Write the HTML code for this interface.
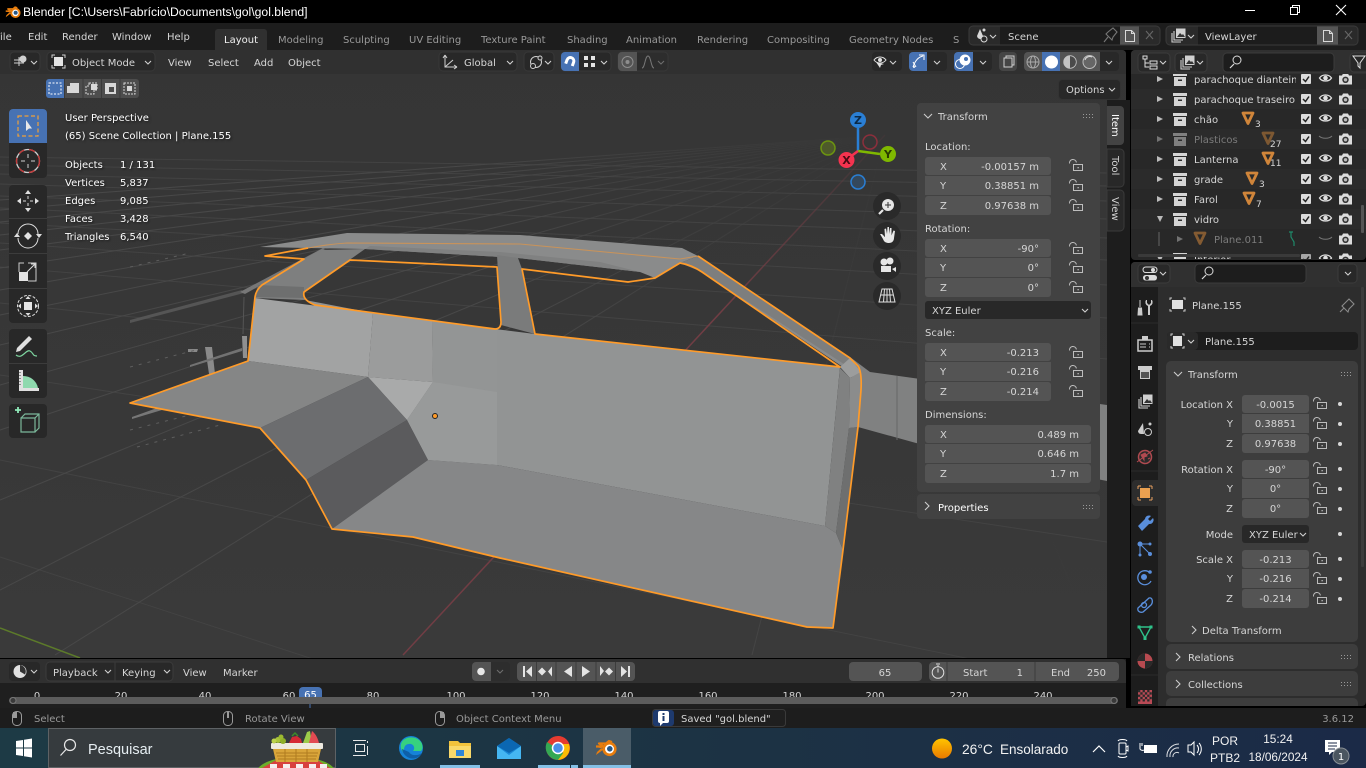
<!DOCTYPE html>
<html><head><meta charset="utf-8"><title>Blender</title>
<style>
html,body{margin:0;padding:0;background:#000;overflow:hidden}
svg{display:block;position:absolute;left:0;top:0}
text{font-family:"DejaVu Sans","Liberation Sans",sans-serif;font-size:10px;fill:#d6d6d6;white-space:pre}
.w{font-family:"Liberation Sans",sans-serif}
.e{text-anchor:end}.m{text-anchor:middle}
.d{fill:#999}.b{fill:#fff}.g{fill:#8a8a8a}
.ic{fill:none;stroke:#d0d0d0;stroke-width:1.1}
.o{fill:none;stroke:#ff9b29;stroke-width:1.7;stroke-linejoin:round}
.sh{filter:drop-shadow(1px 1px 1px rgba(0,0,0,.6))}
</style></head><body>
<svg width="1366" height="768" viewBox="0 0 1366 768" xmlns="http://www.w3.org/2000/svg">
<defs>
<linearGradient id="vp" x1="0" y1="0" x2="0" y2="1"><stop offset="0" stop-color="#353535"/><stop offset="1" stop-color="#3a3a3a"/></linearGradient>
<linearGradient id="tb" x1="0" y1="0" x2="1" y2="0"><stop offset="0" stop-color="#1d3a45"/><stop offset=".5" stop-color="#1c3344"/><stop offset="1" stop-color="#1b2a47"/></linearGradient>
<linearGradient id="sun" x1="0" y1="0" x2="0" y2="1"><stop offset="0" stop-color="#ffc400"/><stop offset="1" stop-color="#ea7a00"/></linearGradient>
<linearGradient id="fan" gradientUnits="userSpaceOnUse" x1="885" y1="135" x2="520" y2="300"><stop offset="0" stop-color="#454545" stop-opacity="0"/><stop offset=".55" stop-color="#454545" stop-opacity=".55"/><stop offset="1" stop-color="#484848"/></linearGradient>
<linearGradient id="red" gradientUnits="userSpaceOnUse" x1="870" y1="150" x2="720" y2="315"><stop offset="0" stop-color="#713d44" stop-opacity=".15"/><stop offset="1" stop-color="#713d44"/></linearGradient>
<clipPath id="cv"><rect x="0" y="74" width="1107" height="584"/></clipPath>
<clipPath id="co"><rect x="1131" y="74" width="235" height="185"/></clipPath>
<clipPath id="cp"><rect x="1131" y="287" width="235" height="419"/></clipPath>
<clipPath id="ct"><rect x="0" y="684" width="1126" height="13"/></clipPath>
<clipPath id="cn"><rect x="1190" y="70" width="106" height="190"/></clipPath>
<clipPath id="cb"><rect x="250" y="728" width="90" height="40"/></clipPath>
<g id="lk"><path d="M.5 4.500A3.400 3.400 0 0 1 7.400 3.400" fill="none" stroke="#bdbdbd" stroke-width="1"/><rect x="4.500" y="5.500" width="9" height="6" fill="none" stroke="#bdbdbd" stroke-width="1"/><rect x="8.500" y="8" width="1.300" height="1.300" fill="#bdbdbd"/></g>
<path id="cd" d="M0 0l3 3 3-3" fill="none" stroke="#d0d0d0" stroke-width="1.1"/>
<g id="box"><rect x="0" y="0" width="14" height="3" fill="#d4d4d4"/><path d="M1 4h12v9H1zM5 6.500v1.500h4V6.500z" fill="#d4d4d4" fill-rule="evenodd"/></g>
<g id="eye"><path d="M.5 5C3 1 10 1 12.500 5 10 9 3 9 .5 5z" fill="none" stroke="#e0e0e0" stroke-width="1.300"/><circle cx="6.500" cy="5" r="2.300" fill="#e0e0e0"/></g>
<g id="cam"><path d="M0 2.500h3l1-2h5l1 2h3v9H0z" fill="#dcdcdc"/><circle cx="6.500" cy="6.800" r="3.200" fill="#333"/><circle cx="6.500" cy="6.800" r="1.700" fill="#bbb"/></g>
<g id="chk"><rect width="10" height="10" rx="1" fill="#dcdcdc"/><path d="M2 5l2.500 2.500L8 2.500" fill="none" stroke="#222" stroke-width="1.500"/></g>
<g id="tri"><path d="M-5 -5H5L0 5.500z" fill="none" stroke="#d0853a" stroke-width="2.800" stroke-linejoin="round"/></g>
<g id="dot"><circle r="2" fill="#d8d8d8"/></g>
<g id="grip" fill="#9a9a9a"><rect x="0" width="1" height="1"/><rect x="3" width="1" height="1"/><rect x="6" width="1" height="1"/><rect x="9" width="1" height="1"/><rect y="3" x="0" width="1" height="1"/><rect y="3" x="3" width="1" height="1"/><rect y="3" x="6" width="1" height="1"/><rect y="3" x="9" width="1" height="1"/></g>
<g id="blg"><path d="M1 8.500h7.500L4 5.500h7L14 3l3 1" fill="none" stroke="#e87d0d" stroke-width="2.200" stroke-linejoin="round"/><circle cx="14.500" cy="11" r="5.800" fill="#fff" stroke="#e87d0d" stroke-width="2.600"/><circle cx="14.800" cy="10.800" r="2.800" fill="#265787"/><path d="M1.500 9l6 0L2 14l-1 3 8-6" fill="#e87d0d"/></g>
<g id="imgs"><path d="M1 5v9h9M3 3v9h9" fill="none" stroke="#d0d0d0" stroke-width="1.100"/><rect x="5" y="0.500" width="9.500" height="9.500" fill="#d0d0d0"/><path d="M6 9l3-4 2 2 1-1 2 3z" fill="#333"/></g>
</defs>

<!-- title bar -->
<rect width="1366" height="23" fill="#000"/>
<use href="#blg" transform="translate(5,5) scale(.72)"/>
<text class="w b" x="23" y="16" style="font-size:12.2px">Blender [C:\Users\Fabrício\Documents\gol\gol.blend]</text>
<rect x="1245" y="10" width="10" height="1" fill="#fff"/>
<path d="M1290.500 7.500h7v7h-7zM1292.500 7V5.500h7v7H1298" fill="none" stroke="#fff"/>
<path d="M1336 5l10 10M1346 5l-10 10" stroke="#fff" stroke-width="1.100"/>

<!-- top bar -->
<rect y="23" width="1366" height="27" fill="#1d1d1d"/>
<text x="-5" y="40">File</text><text x="28" y="40">Edit</text><text x="62" y="40">Render</text><text x="112" y="40">Window</text><text x="167" y="40">Help</text>
<path d="M215 50V32a3 3 0 0 1 3-3h46a3 3 0 0 1 3 3v18z" fill="#303030"/>
<text x="224" y="43" style="fill:#f0f0f0">Layout</text>
<g class="dg"><text class="d" x="278" y="43">Modeling</text><text class="d" x="343" y="43">Sculpting</text><text class="d" x="409" y="43">UV Editing</text><text class="d" x="481" y="43">Texture Paint</text><text class="d" x="567" y="43">Shading</text><text class="d" x="626" y="43">Animation</text><text class="d" x="697" y="43">Rendering</text><text class="d" x="767" y="43">Compositing</text><text class="d" x="849" y="43">Geometry Nodes</text><text class="d" x="953" y="43">S</text></g>
<rect x="960" y="24" width="9" height="26" fill="#1d1d1d"/>
<!-- scene -->
<rect x="969" y="26" width="191" height="19" rx="4" fill="#2a2a2a" stroke="#3a3a3a"/>
<rect x="1000" y="26.500" width="120" height="18" fill="#1c1c1c"/>
<rect x="1120" y="26.500" width="19" height="18" fill="#555"/>
<path d="M980 29l-3 7a3.500 3.500 0 0 0 4 3l2-3z" fill="#d8d8d8"/><circle cx="984" cy="30" r="1.500" fill="#d8d8d8"/><circle cx="984" cy="39" r="3" fill="none" stroke="#d8d8d8"/>
<use href="#cd" transform="translate(990,35)"/>
<text x="1008" y="40">Scene</text>
<path d="M1108 32l5-4 4 4-4 5-1 3-6-6zM1108 37l-4 5" fill="none" stroke="#777" stroke-width="1.100"/>
<path d="M1125.500 30.500h6l3 3v8h-9zM1131.500 30.500v3h3" fill="none" stroke="#d8d8d8" stroke-width="1"/>
<path d="M1146 31l7 8M1153 31l-7 8" stroke="#666" stroke-width="1.100"/>
<rect x="1166" y="26" width="192" height="19" rx="4" fill="#2a2a2a" stroke="#3a3a3a"/>
<rect x="1198" y="26.500" width="119" height="18" fill="#1c1c1c"/>
<rect x="1317" y="26.500" width="21" height="18" fill="#555"/>
<use href="#imgs" transform="translate(1171,28)"/><use href="#cd" transform="translate(1188,35)"/>
<text x="1205" y="40">ViewLayer</text>
<path d="M1323.500 30.500h6l3 3v8h-9zM1329.500 30.500v3h3" fill="none" stroke="#d8d8d8" stroke-width="1"/>
<path d="M1345 31l7 8M1352 31l-7 8" stroke="#666" stroke-width="1.100"/>

<!-- viewport -->
<path d="M0 50H1122a4 4 0 0 1 4 4V658H0z" fill="url(#vp)"/>
<g clip-path="url(#cv)" fill="none" stroke-width="1">
<path stroke="#434343" d="M0 157L1107 173M0 165L1107 186M0 174L1107 201M0 184L1107 219M0 196L1107 238M0 208L1107 260M0 223L1107 285M0 243L1107 318M0 267L1107 359M0 303L1107 420M0 375L1107 542M0 460L1107 687M0 557L500 720"/>
<path stroke="url(#fan)" d="M885 135L0 200M885 135L0 210M885 135L0 222M885 135L0 235M885 135L0 250M885 135L0 268M885 135L0 290M885 135L0 315M885 135L0 345M885 135L0 385M885 135L0 430M885 135L0 500M885 135L0 590M885 135L55 655M885 135L752 655M885 135L1100 655"/>
<path d="M885 135L403 655" stroke="url(#red)" stroke-width="1.500"/>
<path d="M0 628L80 658" stroke="#5c7a2a" stroke-width="1.500"/>
</g>
<!-- stray geometry -->
<g fill="#7d7e7e">
<path d="M130 320L242 290l2 3L130 323z" fill="#555"/>
<path d="M205 347h7l3 27h-6z" fill="#8a8a8a"/><path d="M190 365l52-17v3l-52 16z" fill="#727272"/>
<path d="M188 349h10l-1 3h-9z" fill="#888"/><path d="M242 336h5v22h-4z" fill="#909090"/>
<path d="M132 417l25-9 5 2-30 9z" fill="#777"/>
<path d="M244 297L243 334" stroke="#555" fill="none"/>
<path d="M240 292L323 248l2 1-80 45z" fill="#777"/>
</g>
<g fill="none" stroke="#5e5e5e" stroke-dasharray="3 6"><path d="M130 267L190 253M130 367L200 349M130 430L210 410M137 447L220 425"/></g>
<!-- side wing -->
<path d="M850 357L870 372L1107 405V481L916 443L858 427z" fill="#808181"/>
<path d="M897 376V440" stroke="#666" stroke-width="1"/>
<!-- roof -->
<path d="M260 247L347 233L520 235L682 248L698 256L680 263L655 278L640 272L518 258L365 249L308 248z" fill="#8a8b8b"/>
<path d="M365 249L518 258L640 272L600 262L500 252L370 246z" fill="#808181"/>
<!-- C pillar -->
<path d="M262 285L304 259L320 250L365 249L304 292L305 300L255 298z" fill="#7e7f7f"/>
<path d="M258 285L304 287L304 298L255 297z" fill="#6e6f6f"/>
<!-- B pillar -->
<path d="M497 255L518 258L522 269L535 334L501 325z" fill="#7a7b7b"/>
<!-- A pillar -->
<path d="M680 263L698 256L850 358L860 365L843 367L702 272z" fill="#7d7e7e"/>
<path d="M702 272L850 368L843 367z" fill="#8a8b8b"/>
<path d="M840 367L850 358L861 372L850 378z" fill="#9c9d9d"/>
<!-- body -->
<path d="M255 298L373 313L368 377L248 361z" fill="#a2a3a3"/>
<path d="M373 313L432 320L433 382L368 377z" fill="#9b9c9c"/>
<path d="M305 300L315 305L495 329L535 334L840 367L825 526L497 465L428 460L407 420L433 382L432 320L373 313z" fill="#929494"/>
<path d="M432 320L497 330L497 392L433 382z" fill="#939595"/>
<path d="M368 377L433 382L407 420z" fill="#a9aaaa"/>
<path d="M433 382L497 392V465L428 460L407 420z" fill="#989a9a"/>
<path d="M130 403L248 361L368 377L260 428z" fill="#858686"/>
<path d="M260 428L368 377L407 420L306 480z" fill="#6c6d6f"/>
<path d="M306 480L407 420L428 460L332 529z" fill="#5b5b5d"/>
<path d="M332 529L428 460L497 465L825 526L836 533L843 550L833 628L807 627L500 558L413 537z" fill="#868788"/>
<path d="M825 526L840 368L850 378L849 428L836 533z" fill="#808181"/>
<path d="M836 533L849 428L858 427L843 550z" fill="#6e6f6f"/>
<path d="M850 378L861 372L861 390L858 427L849 428z" fill="#8b8c8c"/>
<!-- outlines -->
<path class="o" d="M308 248L265 256L304 259L262 285Q256 290 255 297L248 361L130 403L260 428L306 480L332 529L413 537L500 558L807 627L833 628L843 550L858 427L861 390Q862 372 858 366L850 358L698 256"/>
<path d="M308 248Q330 244 347 243L520 244L680 259L698 256" fill="none" stroke="#c9935a" stroke-width="1.100"/>
<path class="o" d="M350 260L497 267L501 322Q501 329 495 329L315 305Q302 300 304 292z"/>
<path class="o" d="M522 269L628 282L655 278L680 263Q692 265 702 272L840 367L535 334z"/>
<circle cx="435" cy="416" r="2.500" fill="#ff9b29" stroke="#222" stroke-width="1"/>

<!-- viewport header -->
<path d="M0 50H1122a4 4 0 0 1 4 4V74H0z" fill="#303030"/>
<rect x="10" y="52" width="30" height="19" rx="4" fill="#282828" stroke="#383838"/>
<path d="M14 60h10M14 63h10M19 57v9" stroke="#d0d0d0"/><circle cx="23" cy="59" r="3.500" fill="#d0d0d0"/><use href="#cd" transform="translate(31,61)"/>
<rect x="47" y="52" width="108" height="19" rx="4" fill="#282828" stroke="#383838"/>
<path d="M52 58v-3h3M62 55h3v3M65 65v3h-3M55 68h-3v-3" fill="none" stroke="#d0d0d0"/><rect x="54" y="57" width="9" height="9" fill="#e4e4e4"/>
<text x="72" y="66">Object Mode</text><use href="#cd" transform="translate(145,61)"/>
<text x="168" y="66">View</text><text x="208" y="66">Select</text><text x="254" y="66">Add</text><text x="288" y="66">Object</text>
<rect x="439" y="52" width="78" height="19" rx="4" fill="#282828" stroke="#383838"/>
<path d="M445 55v12h12M445 55l-2 3M445 55l2 3M457 67l-3-2M457 67l-3 2M445 67l8-7" fill="none" stroke="#d0d0d0"/>
<text x="464" y="66">Global</text><use href="#cd" transform="translate(507,61)"/>
<rect x="524" y="52" width="30" height="19" rx="4" fill="#282828" stroke="#383838"/>
<circle cx="536" cy="62" r="5.500" fill="none" stroke="#d0d0d0"/><circle cx="533" cy="66" r="2.500" fill="#282828" stroke="#d0d0d0"/><circle cx="540" cy="58" r="2" fill="#282828" stroke="#d0d0d0"/><use href="#cd" transform="translate(545,61)"/>
<rect x="561" y="52" width="50" height="19" rx="4" fill="#282828" stroke="#383838"/>
<path d="M561 56a4 4 0 0 1 4-4h14v19h-14a4 4 0 0 1-4-4z" fill="#4772b3"/>
<path d="M565 65v-4a5 5 0 0 1 10 0v4h-3v-4a2 2 0 0 0-4 0v4z" fill="#fff" transform="rotate(20 570 62)"/>
<g fill="#e4e4e4"><rect x="584" y="56" width="4" height="4"/><rect x="591" y="56" width="4" height="4"/><rect x="584" y="63" width="4" height="4"/><rect x="591" y="63" width="4" height="4"/></g><use href="#cd" transform="translate(601,61)"/>
<rect x="618" y="52" width="50" height="19" rx="4" fill="#2d2d2d" stroke="#383838"/>
<path d="M618 56a4 4 0 0 1 4-4h15v19h-15a4 4 0 0 1-4-4z" fill="#545454"/>
<circle cx="627.500" cy="62" r="5.500" fill="none" stroke="#8e8e8e"/><circle cx="627.500" cy="62" r="2" fill="#8e8e8e"/>
<path d="M642 68c3 0 3-12 6-12s3 12 6 12" fill="none" stroke="#777"/><use href="#cd" transform="translate(658,61)" opacity=".4"/>

<rect x="872" y="52" width="30" height="19" rx="4" fill="#282828"/>
<path d="M874 60c3-4 9-4 12 0-3 4-9 4-12 0z" fill="none" stroke="#e0e0e0"/><circle cx="880" cy="60" r="2" fill="#e0e0e0"/><path d="M876 62l4 6 1-3 3-1z" fill="#e0e0e0"/><use href="#cd" transform="translate(890,61)"/>
<rect x="909" y="52" width="38" height="19" rx="4" fill="#282828"/>
<path d="M909 56a4 4 0 0 1 4-4h14v19h-14a4 4 0 0 1-4-4z" fill="#4772b3"/>
<path d="M913 67c2-6 5-10 10-11M919 55h5v5M913 62l3 5" fill="none" stroke="#fff"/><circle cx="914" cy="67" r="1" fill="#fff"/><use href="#cd" transform="translate(934,61)"/>
<rect x="954" y="52" width="38" height="19" rx="4" fill="#282828"/>
<path d="M954 56a4 4 0 0 1 4-4h15v19h-15a4 4 0 0 1-4-4z" fill="#4772b3"/>
<circle cx="965" cy="60" r="5.500" fill="#fff"/><circle cx="960" cy="64" r="4.500" fill="none" stroke="#fff"/><circle cx="966" cy="59" r="2" fill="#4772b3"/><use href="#cd" transform="translate(980,61)"/>
<rect x="999" y="52" width="18" height="19" rx="4" fill="#454545"/>
<path d="M1004 58h8v9h-8zM1006 58v-2h8v9h-2" fill="none" stroke="#d0d0d0"/>
<rect x="1024" y="52" width="95" height="19" rx="4" fill="#282828"/>
<rect x="1042" y="52" width="18" height="19" fill="#4772b3"/><rect x="1060" y="52" width="40" height="19" fill="#545454"/>
<path d="M1024 56a4 4 0 0 1 4-4h14v19h-14a4 4 0 0 1-4-4z" fill="#545454"/>
<circle cx="1033" cy="62" r="6" fill="none" stroke="#aaa"/><ellipse cx="1033" cy="62" rx="2.500" ry="6" fill="none" stroke="#aaa"/><path d="M1027 62h12" stroke="#aaa"/>
<circle cx="1051.500" cy="62" r="6.500" fill="#fff"/>
<circle cx="1070" cy="62" r="6.500" fill="#c4c4c4"/><path d="M1070 56a6 6 0 0 1 0 12z" fill="#4a4a4a"/><circle cx="1070" cy="62" r="6.300" fill="none" stroke="#c4c4c4" stroke-width=".8"/>
<circle cx="1089.500" cy="62" r="6.500" fill="#666" stroke="#bdbdbd"/><path d="M1085 60a5 5 0 0 1 7-3" stroke="#ddd" fill="none"/>
<use href="#cd" transform="translate(1106,61)"/>
<rect x="46" y="79" width="93" height="19" rx="3" fill="#4d4d4d"/>
<path d="M46 82a3 3 0 0 1 3-3h15v19H49a3 3 0 0 1-3-3z" fill="#4772b3"/>
<path d="M64.500 79v19M83 79v19M101.500 79v19M120 79v19" stroke="#3a3a3a"/>
<rect x="49" y="83" width="12" height="11" fill="none" stroke="#fff" stroke-dasharray="2 1.500"/>
<path d="M70 83h9v10h-12v-7h3z" fill="#d8d8d8"/>
<path d="M89 83h8v7h-3v4h-8v-8h3z" fill="none" stroke="#d8d8d8" stroke-dasharray="2 1"/><rect x="91" y="84" width="6" height="6" fill="#d8d8d8"/>
<path d="M105 83h11v11h-11z" fill="#d8d8d8"/><rect x="109" y="87" width="5" height="5" fill="#4d4d4d"/>
<rect x="124" y="83" width="11" height="11" fill="none" stroke="#d8d8d8" stroke-dasharray="2 1"/><rect x="127" y="86" width="5" height="5" fill="#d8d8d8"/>
<rect x="1058.500" y="79.500" width="62" height="20" rx="4" fill="#282828" stroke="#333"/>
<text x="1066" y="93">Options</text><use href="#cd" transform="translate(1109,88)"/>

<!-- left toolbar -->
<g fill="#282828"><rect x="9" y="109" width="38" height="69" rx="4"/><rect x="9" y="185" width="38" height="138" rx="4"/><rect x="9" y="329" width="38" height="69" rx="4"/><rect x="9" y="404" width="38" height="34" rx="4"/></g>
<path d="M9 143V113a4 4 0 0 1 4-4h30a4 4 0 0 1 4 4v30z" fill="#4772b3"/>
<path d="M9 218.500h38M9 253.500h38M9 288.500h38M9 363.500h38" stroke="#3c3c3c"/>
<rect x="18" y="116" width="20" height="20" fill="none" stroke="#f0a13a" stroke-width="1.200" stroke-dasharray="4 2.500"/>
<path d="M26 120v11l3-2.500 3 0z" fill="#e8e8e8"/>
<circle cx="28" cy="161" r="11.500" fill="none" stroke="#d0d0d0" stroke-width="1.300"/><circle cx="28" cy="161" r="11.500" fill="none" stroke="#c23a3a" stroke-width="1.400" stroke-dasharray="6 5"/>
<path d="M28 154v4M28 164v4M21 161h4M31 161h4" stroke="#d0d0d0"/>
<path d="M28 190l3 4h-6zM28 212l3-4h-6zM17 201l4-3v6zM39 201l-4-3v6z" fill="#e0e0e0"/><path d="M28 196v3M28 203v3M23 201h3M30 201h3" stroke="#ddd"/>
<path d="M18 234a10 10 0 0 1 20 0M18 238a10 10 0 0 0 20 0" fill="none" stroke="#ddd"/><path d="M28 232l4 4-4 4-4-4z" fill="#e4e4e4"/><path d="M17 233l3 4h-6zM39 238l3-4h-6z" fill="#ddd"/>
<rect x="19" y="272" width="9" height="9" fill="#e4e4e4"/><path d="M28 263h8v18h-8M19 272v-9h5" fill="none" stroke="#ccc"/><path d="M27 272l8-8M31 264h4v4" fill="none" stroke="#ddd"/>
<circle cx="28" cy="306" r="10.500" fill="none" stroke="#ddd" stroke-dasharray="3 1.500"/><rect x="24" y="302" width="8" height="8" fill="#e4e4e4"/><path d="M28 296l2.500 3h-5zM28 316l2.500-3h-5zM18 306l3-2.500v5zM38 306l-3-2.500v5z" fill="#ddd"/>
<path d="M17 348l12-12 3 3-12 12-4 1z" fill="#e0e0e0"/><path d="M19 352c6 5 10-6 14-4s2 5 7 5" fill="none" stroke="#7ed6a0" stroke-width="1.200" transform="translate(-3,3)"/>
<path d="M19 370h4v18h16v3H19z" fill="#e0e0e0"/><path d="M23 376a15 15 0 0 1 15 12H23z" fill="#8fd9ae"/><path d="M20 372v14" stroke="#333" stroke-dasharray="1 2"/>
<path d="M21 418h14v14H21zM21 418l4-4h14v14l-4 4M35 418l4-4" fill="none" stroke="#7bb89a" stroke-width="1.200"/><path d="M15 410h6M18 407v6" stroke="#8fe8b8" stroke-width="1.800"/>

<!-- overlay text -->
<g class="sh"><text x="65" y="121" class="b">User Perspective</text><text x="65" y="139" class="b">(65) Scene Collection | Plane.155</text>
<text x="65" y="168" class="b">Objects</text><text x="120" y="168" class="b">1 / 131</text>
<text x="65" y="186" class="b">Vertices</text><text x="120" y="186" class="b">5,837</text>
<text x="65" y="204" class="b">Edges</text><text x="120" y="204" class="b">9,085</text>
<text x="65" y="222" class="b">Faces</text><text x="120" y="222" class="b">3,428</text>
<text x="65" y="240" class="b">Triangles</text><text x="120" y="240" class="b">6,540</text></g>

<!-- gizmo -->
<path d="M858 151V128" stroke="#2a7fd5" stroke-width="2.500"/><path d="M858 151L880 154" stroke="#7fb800" stroke-width="2.500"/><path d="M858 151L846 160" stroke="#f5334f" stroke-width="2.500"/>
<circle cx="870" cy="142" r="7" fill="none" stroke="#8c2f3c" stroke-width="1.500"/>
<circle cx="828" cy="148" r="7" fill="#4e5a2a" stroke="#6c9410" stroke-width="1.500"/>
<circle cx="858" cy="182" r="7" fill="#34485c" stroke="#2a7fd5" stroke-width="1.500"/>
<circle cx="858" cy="120" r="8" fill="#2a7fd5"/><circle cx="888" cy="154" r="8" fill="#7fb800"/><circle cx="846.500" cy="160" r="8" fill="#f5334f"/>
<text class="m" x="858" y="124" style="font-size:11px;font-weight:700;fill:#0c2a48">Z</text>
<text class="m" x="888" y="158" style="font-size:11px;font-weight:700;fill:#2a3a00">Y</text>
<text class="m" x="846.500" y="164" style="font-size:11px;font-weight:700;fill:#4a0a14">X</text>
<g fill="#2a2a2a"><circle cx="887" cy="206" r="14"/><circle cx="887" cy="236" r="14"/><circle cx="887" cy="266" r="14"/><circle cx="887" cy="296" r="14"/></g>
<circle cx="888" cy="205" r="6" fill="#e6e6e6"/><path d="M883 210l-4 4" stroke="#e6e6e6" stroke-width="2.200"/><path d="M888 202v6M885 205h6" stroke="#333"/>
<path d="M880 234l3 5c1 3 3 4 6 4s5-2 5-5l1-7-1.500-.5-2 5V228h-1.500l-1 6v-7h-1.500l-.5 7-1-5.500-1.500.5.500 8-3-3z" fill="#e8e8e8"/>
<circle cx="884" cy="262" r="3.500" fill="#e6e6e6"/><circle cx="890" cy="261" r="3.500" fill="#e6e6e6"/><rect x="881" y="266" width="10" height="6" fill="#e6e6e6"/><path d="M892 269l4-2v5z" fill="#e6e6e6"/>
<path d="M882 289h10l3 13h-16zM887 289v13M880.500 295h13M884.500 289l-1 13M889.500 289l1 13" fill="none" stroke="#e0e0e0"/>

<!-- N panel -->
<rect x="1107" y="100" width="23" height="558" fill="#1d1d1d"/>
<path d="M1107 106h13a4 4 0 0 1 4 4v31a4 4 0 0 1-4 4h-13z" fill="#434343"/>
<path d="M1107 149h13a4 4 0 0 1 4 4v30a4 4 0 0 1-4 4h-13zM1107 190h13a4 4 0 0 1 4 4v33a4 4 0 0 1-4 4h-13z" fill="#282828" stroke="#3a3a3a"/>
<text transform="translate(1112,114) rotate(90)" class="b">Item</text>
<text transform="translate(1112,156) rotate(90)">Tool</text>
<text transform="translate(1112,197) rotate(90)">View</text>
<rect x="917" y="103" width="183" height="389" rx="4" fill="#424242"/>
<rect x="917" y="494" width="183" height="25" rx="4" fill="#424242"/>
<path d="M924 114l4 4 4-4" fill="none" stroke="#ccc" stroke-width="1.100"/><text x="938" y="120">Transform</text><use href="#grip" transform="translate(1083,114)"/>
<path d="M925 502l4 4-4 4" fill="none" stroke="#ccc" stroke-width="1.100"/><text x="938" y="511" class="b">Properties</text><use href="#grip" transform="translate(1083,505)"/>
<text x="925" y="150">Location:</text><text x="925" y="232">Rotation:</text><text x="925" y="336">Scale:</text><text x="925" y="418">Dimensions:</text>
<g fill="#545454"><rect x="925" y="157" width="126" height="18" rx="3"/><rect x="925" y="176" width="126" height="19"/><rect x="925" y="196" width="126" height="19" rx="3"/>
<rect x="925" y="239" width="126" height="18" rx="3"/><rect x="925" y="258" width="126" height="19"/><rect x="925" y="278" width="126" height="19" rx="3"/>
<rect x="925" y="343" width="126" height="18" rx="3"/><rect x="925" y="362" width="126" height="19"/><rect x="925" y="382" width="126" height="19" rx="3"/>
<rect x="925" y="425" width="166" height="18" rx="3"/><rect x="925" y="444" width="166" height="19"/><rect x="925" y="464" width="166" height="19" rx="3"/></g>
<rect x="925" y="301" width="166" height="18" rx="3" fill="#282828"/><text x="932" y="314">XYZ Euler</text><use href="#cd" transform="translate(1082,309)"/>
<g class="xyz"><text x="940" y="170">X</text><text x="940" y="189">Y</text><text x="940" y="209">Z</text><text x="940" y="252">X</text><text x="940" y="271">Y</text><text x="940" y="291">Z</text><text x="940" y="356">X</text><text x="940" y="375">Y</text><text x="940" y="395">Z</text><text x="940" y="438">X</text><text x="940" y="457">Y</text><text x="940" y="477">Z</text></g>
<text class="e" x="1039" y="170">-0.00157 m</text><text class="e" x="1039" y="189">0.38851 m</text><text class="e" x="1039" y="209">0.97638 m</text>
<text class="e" x="1039" y="252">-90°</text><text class="e" x="1039" y="271">0°</text><text class="e" x="1039" y="291">0°</text>
<text class="e" x="1039" y="356">-0.213</text><text class="e" x="1039" y="375">-0.216</text><text class="e" x="1039" y="395">-0.214</text>
<text class="e" x="1079" y="438">0.489 m</text><text class="e" x="1079" y="457">0.646 m</text><text class="e" x="1079" y="477">1.7 m</text>
<use href="#lk" transform="translate(1069,159)"/><use href="#lk" transform="translate(1069,179)"/><use href="#lk" transform="translate(1069,199)"/>
<use href="#lk" transform="translate(1069,242)"/><use href="#lk" transform="translate(1069,261)"/><use href="#lk" transform="translate(1069,281)"/>
<use href="#lk" transform="translate(1069,346)"/><use href="#lk" transform="translate(1069,365)"/><use href="#lk" transform="translate(1069,385)"/>

<!-- outliner -->
<rect x="1131" y="50" width="235" height="210" rx="4" fill="#282828"/>
<g clip-path="url(#co)">
<rect x="1131" y="89" width="235" height="20" fill="#2b2b2b"/><rect x="1131" y="129" width="235" height="20" fill="#2b2b2b"/><rect x="1131" y="169" width="235" height="20" fill="#2b2b2b"/><rect x="1131" y="209" width="235" height="20" fill="#2b2b2b"/>
<g fill="#bbb"><path d="M1157 76l6 3-6 3zM1157 96l6 3-6 3zM1157 116l6 3-6 3zM1157 156l6 3-6 3zM1157 176l6 3-6 3zM1157 196l6 3-6 3z"/><path d="M1157 136l6 3-6 3z" opacity=".5"/><path d="M1157 216h6l-3 6zM1157 256h6l-3 6z"/><path d="M1177 236l6 3-6 3z" opacity=".5"/></g>
<use href="#box" transform="translate(1173,73)"/><use href="#box" transform="translate(1173,93)"/><use href="#box" transform="translate(1173,113)"/><use href="#box" transform="translate(1173,133)" opacity=".5"/><use href="#box" transform="translate(1173,153)"/><use href="#box" transform="translate(1173,173)"/><use href="#box" transform="translate(1173,193)"/><use href="#box" transform="translate(1173,213)"/><use href="#box" transform="translate(1173,253)"/>
<path d="M1159 232v14" stroke="#666"/>
<g clip-path="url(#cn)"><text x="1194" y="83">parachoque diantein</text></g>
<text x="1194" y="103">parachoque traseiro</text>
<text x="1194" y="123">chão</text><text x="1194" y="143" style="fill:#7a7a7a">Plasticos</text><text x="1194" y="163">Lanterna</text><text x="1194" y="183">grade</text><text x="1194" y="203">Farol</text><text x="1194" y="223">vidro</text><text x="1214" y="243" style="fill:#7c7c7c">Plane.011</text><text x="1194" y="263">Interior</text>
<use href="#tri" transform="translate(1248,118)"/><use href="#tri" transform="translate(1268,138)" opacity=".5"/><use href="#tri" transform="translate(1268,158)"/><use href="#tri" transform="translate(1252,178)"/><use href="#tri" transform="translate(1249,198)"/><use href="#tri" transform="translate(1200,238)" opacity=".55"/>
<text x="1255" y="127" style="font-size:9px">3</text><text x="1270" y="147" style="font-size:9px">27</text><text x="1270" y="166" style="font-size:9px">11</text><text x="1259" y="187" style="font-size:9px">3</text><text x="1256" y="207" style="font-size:9px">7</text>
<path d="M1289 232h4M1291 232l0 5 3 5v4" fill="none" stroke="#1f8a6a" stroke-width="1.200"/>
<use href="#chk" transform="translate(1301,74)"/><use href="#chk" transform="translate(1301,94)"/><use href="#chk" transform="translate(1301,114)"/><use href="#chk" transform="translate(1301,134)"/><use href="#chk" transform="translate(1301,154)"/><use href="#chk" transform="translate(1301,174)"/><use href="#chk" transform="translate(1301,194)"/><use href="#chk" transform="translate(1301,214)"/><use href="#chk" transform="translate(1301,254)" opacity=".7"/>
<use href="#eye" transform="translate(1319,73)"/><use href="#eye" transform="translate(1319,93)"/><use href="#eye" transform="translate(1319,113)"/><path d="M1319 136c3 3 10 3 13 0" fill="none" stroke="#777"/><use href="#eye" transform="translate(1319,153)"/><use href="#eye" transform="translate(1319,173)"/><use href="#eye" transform="translate(1319,193)"/><use href="#eye" transform="translate(1319,213)"/><path d="M1319 237c3 3 10 3 13 0" fill="none" stroke="#777"/><use href="#eye" transform="translate(1319,253)"/>
<use href="#cam" transform="translate(1339,73)"/><use href="#cam" transform="translate(1339,93)"/><use href="#cam" transform="translate(1339,113)"/><use href="#cam" transform="translate(1339,133)"/><use href="#cam" transform="translate(1339,153)"/><use href="#cam" transform="translate(1339,173)"/><use href="#cam" transform="translate(1339,193)"/><use href="#cam" transform="translate(1339,213)"/><use href="#cam" transform="translate(1339,233)"/><use href="#cam" transform="translate(1339,253)"/>
<rect x="1361" y="205" width="3" height="28" rx="1" fill="#555"/><rect x="1138" y="254" width="162" height="3" rx="1" fill="#3a3a3a"/>
</g>
<path d="M1131 54a4 4 0 0 1 4-4h231v24H1131z" fill="#303030"/>
<rect x="1138" y="53" width="32" height="19" rx="4" fill="#282828" stroke="#3b3b3b"/>
<path d="M1143 56h4v3h-4zM1145 59v8h4M1145 63h4M1150 61h7v3h-7zM1150 66h7v3h-7z" fill="none" stroke="#ddd"/><use href="#cd" transform="translate(1160,61)"/>
<rect x="1175" y="53" width="32" height="19" rx="4" fill="#282828" stroke="#3b3b3b"/><use href="#imgs" transform="translate(1180,55)"/><use href="#cd" transform="translate(1197,61)"/>
<rect x="1223" y="53" width="111" height="19" rx="4" fill="#1d1d1d" stroke="#3b3b3b"/>
<circle cx="1237" cy="60" r="4" fill="none" stroke="#ddd"/><path d="M1234 64l-4 4" stroke="#ddd" stroke-width="1.200"/>
<rect x="1350" y="53" width="20" height="19" rx="4" fill="#282828" stroke="#3b3b3b"/><path d="M1353 56h12l-5 7v5l-2-2v-3z" fill="none" stroke="#ddd"/>

<!-- properties -->
<rect x="1131" y="262" width="235" height="444" rx="4" fill="#2d2d2d"/>
<path d="M1131 266a4 4 0 0 1 4-4h231v25H1131z" fill="#303030"/>
<rect x="1138" y="264" width="32" height="19" rx="4" fill="#282828" stroke="#3b3b3b"/>
<rect x="1143" y="267" width="14" height="5.500" rx="2.700" fill="none" stroke="#ddd"/><circle cx="1153" cy="270" r="2" fill="#ddd"/><rect x="1143" y="275" width="14" height="5.500" rx="2.700" fill="#ddd"/><circle cx="1147" cy="278" r="2" fill="#333"/><use href="#cd" transform="translate(1160,272)"/>
<rect x="1195" y="264" width="111" height="19" rx="4" fill="#1d1d1d" stroke="#3b3b3b"/>
<circle cx="1209" cy="271" r="4" fill="none" stroke="#ddd"/><path d="M1206 275l-4 4" stroke="#ddd" stroke-width="1.200"/>
<rect x="1338" y="264" width="19" height="19" rx="4" fill="#282828" stroke="#3b3b3b"/><use href="#cd" transform="translate(1345,272)"/>
<rect x="1131" y="287" width="27" height="419" fill="#1d1d1d"/>
<path d="M1131 323h27M1131 471h27M1131 675h27" stroke="#2a2a2a"/>
<path d="M1132 484a4 4 0 0 1 4-4h22v26h-22a4 4 0 0 1-4-4z" fill="#2d2d2d"/>
<g clip-path="url(#cp)">
<path d="M1140 300v7M1138.500 308h3l.5 7h-4z" stroke="#ccc" fill="#ccc"/><path d="M1147 300v3l2 2 2-2v-3l1 0a4 4 0 0 1-2 6v9h-2v-9a4 4 0 0 1-2-6z" fill="#ccc"/>
<rect x="1138" y="340" width="14" height="11" fill="none" stroke="#ccc" stroke-width="1.500"/><rect x="1142" y="336" width="6" height="4" fill="#ccc"/><path d="M1140 344h6M1140 347h6M1149 344h1M1149 347h1" stroke="#ccc"/>
<path d="M1138 366h14v4h-2v9h-10v-9h-2z" fill="#ccc"/><rect x="1141" y="372" width="8" height="6" fill="#555"/>
<use href="#imgs" transform="translate(1138,394)"/>
<path d="M1143 423l-5 8a3 3 0 0 0 3 3h3z" fill="#ccc"/><circle cx="1150" cy="424" r="1.500" fill="#ccc"/><circle cx="1148" cy="432" r="3.500" fill="none" stroke="#ccc"/>
<circle cx="1145" cy="457" r="6.500" fill="#2a2a2a" stroke="#b04a50" stroke-width="1.500"/><path d="M1141 455l4-2 2 3-3 1v3zM1148 459l2-1" stroke="#b04a50" fill="#b04a50"/><path d="M1137 462l16-12" stroke="#b04a50"/>
<path d="M1138 486v3M1138 486h3M1152 486h-3M1152 486v3M1138 500v-3M1138 500h3M1152 500h-3M1152 500v-3" stroke="#e8a060" fill="none"/><rect x="1140" y="488" width="10" height="10" fill="#eaa050"/>
<path d="M1138 526l7-7a4 4 0 0 1 6-3l-3 3 2 2 3-3a4 4 0 0 1-4 6l-7 7z" fill="#5a8fdc"/>
<circle cx="1140" cy="544" r="2.500" fill="#5a8fdc"/><circle cx="1140" cy="555" r="1.500" fill="#5a8fdc"/><circle cx="1150" cy="554" r="2" fill="#5a8fdc"/><circle cx="1150" cy="544" r="1.500" fill="#5a8fdc"/><path d="M1140 544v11M1140 544l10 10M1140 544h10" stroke="#5a8fdc"/>
<circle cx="1144" cy="577" r="3" fill="#5a8fdc"/><path d="M1151 581a7 7 0 1 1-1-8" fill="none" stroke="#5a8fdc" stroke-width="1.300"/><circle cx="1150" cy="572" r="1.800" fill="#5a8fdc"/>
<path d="M1138 608l11-10c4-1 4 5 2 7l-8 7c-3 1-6-1-5-4z" fill="none" stroke="#5a8fdc" stroke-width="1.300"/><circle cx="1144" cy="605" r="2.500" fill="none" stroke="#5a8fdc" stroke-width="1.300"/>
<path d="M1139 627h12l-6 11z" fill="none" stroke="#2ec28a" stroke-width="1.400"/><g fill="#2ec28a"><rect x="1137.500" y="625.500" width="3" height="3"/><rect x="1149.500" y="625.500" width="3" height="3"/><rect x="1143.500" y="637" width="3" height="3"/></g>
<circle cx="1145" cy="661" r="7.500" fill="#b84a50"/><path d="M1145 653.500a7.500 7.500 0 0 0-7.500 7.500h7.500zM1145 661h7.500a7.500 7.500 0 0 1-7.500 7.500z" fill="#2a2a2a"/>
<rect x="1138" y="690" width="14" height="14" fill="#b84a55"/><path d="M1138 690h2.300v2.300h-2.300zM1142.600 690h2.300v2.300h-2.300zM1147.200 690h2.300v2.300h-2.300zM1140.300 692.300h2.300v2.300h-2.300zM1144.900 692.300h2.300v2.300h-2.300zM1149.500 692.300h2.300v2.300h-2.300zM1138 694.600h2.300v2.300h-2.300zM1142.600 694.600h2.300v2.300h-2.300zM1147.200 694.600h2.300v2.300h-2.300zM1140.300 696.900h2.300v2.300h-2.300zM1144.900 696.900h2.300v2.300h-2.300zM1149.500 696.900h2.300v2.300h-2.300zM1138 699.200h2.300v2.300h-2.300zM1142.600 699.200h2.300v2.300h-2.300zM1147.200 699.200h2.300v2.300h-2.300z" fill="#2a2a2a"/>
</g>
<path d="M1170 300v-2h2M1183 298h2v2M1185 309v2h-2M1172 311h-2v-2" fill="none" stroke="#ccc"/><rect x="1172" y="300" width="11" height="9" fill="#e0e0e0"/>
<text x="1192" y="309">Plane.155</text>
<path d="M1344 304l5-5 5 5-5 5-1 3-6-6zM1344 308l-4 4" fill="none" stroke="#8a8a8a" stroke-width="1.100"/>
<rect x="1167" y="332" width="191" height="18" rx="4" fill="#1d1d1d"/><rect x="1167" y="332" width="31" height="18" rx="4" fill="#2a2a2a"/>
<path d="M1171 336v-2h2M1182 334h2v2M1184 346v2h-2M1173 348h-2v-2" fill="none" stroke="#ccc"/><rect x="1173" y="336" width="9" height="10" fill="#e0e0e0"/><use href="#cd" transform="translate(1188,340)"/>
<text x="1205" y="345">Plane.155</text>
<rect x="1166" y="361" width="192" height="281" rx="5" fill="#3d3d3d"/>
<rect x="1166" y="644" width="192" height="25" rx="5" fill="#3d3d3d"/><rect x="1166" y="671" width="192" height="25" rx="5" fill="#3d3d3d"/>
<path d="M1166 703a5 5 0 0 1 5-5h182a5 5 0 0 1 5 5v3h-192z" fill="#3d3d3d"/>
<path d="M1174 372l4 4 4-4" fill="none" stroke="#ccc" stroke-width="1.100"/><text x="1188" y="378">Transform</text><use href="#grip" transform="translate(1341,372)"/>
<g fill="#545454"><rect x="1242" y="395" width="67" height="18" rx="3"/><rect x="1242" y="414" width="67" height="19"/><rect x="1242" y="434" width="67" height="19" rx="3"/><rect x="1242" y="460" width="67" height="18" rx="3"/><rect x="1242" y="479" width="67" height="19"/><rect x="1242" y="499" width="67" height="19" rx="3"/><rect x="1242" y="550" width="67" height="18" rx="3"/><rect x="1242" y="569" width="67" height="19"/><rect x="1242" y="589" width="67" height="19" rx="3"/></g>
<rect x="1242" y="525" width="67" height="18" rx="3" fill="#282828"/>
<text class="e" x="1233" y="408">Location X</text><text class="e" x="1233" y="427">Y</text><text class="e" x="1233" y="447">Z</text>
<text class="e" x="1233" y="473">Rotation X</text><text class="e" x="1233" y="492">Y</text><text class="e" x="1233" y="512">Z</text>
<text class="e" x="1233" y="538">Mode</text>
<text class="e" x="1233" y="563">Scale X</text><text class="e" x="1233" y="582">Y</text><text class="e" x="1233" y="602">Z</text>
<text class="m" x="1275.500" y="408">-0.0015</text><text class="m" x="1275.500" y="427">0.38851</text><text class="m" x="1275.500" y="447">0.97638</text>
<text class="m" x="1275.500" y="473">-90°</text><text class="m" x="1275.500" y="492">0°</text><text class="m" x="1275.500" y="512">0°</text>
<text x="1249" y="538">XYZ Euler</text><use href="#cd" transform="translate(1300,533)"/>
<text class="m" x="1275.500" y="563">-0.213</text><text class="m" x="1275.500" y="582">-0.216</text><text class="m" x="1275.500" y="602">-0.214</text>
<use href="#lk" transform="translate(1313,397)"/><use href="#lk" transform="translate(1313,417)"/><use href="#lk" transform="translate(1313,437)"/><use href="#lk" transform="translate(1313,462)"/><use href="#lk" transform="translate(1313,482)"/><use href="#lk" transform="translate(1313,502)"/><use href="#lk" transform="translate(1313,552)"/><use href="#lk" transform="translate(1313,572)"/><use href="#lk" transform="translate(1313,592)"/>
<use href="#dot" transform="translate(1340,404)"/><use href="#dot" transform="translate(1340,424)"/><use href="#dot" transform="translate(1340,444)"/><use href="#dot" transform="translate(1340,469)"/><use href="#dot" transform="translate(1340,489)"/><use href="#dot" transform="translate(1340,509)"/><use href="#dot" transform="translate(1340,534)"/><use href="#dot" transform="translate(1340,559)"/><use href="#dot" transform="translate(1340,579)"/><use href="#dot" transform="translate(1340,599)"/>
<path d="M1192 626l4 4-4 4" fill="none" stroke="#ccc" stroke-width="1.100"/><text x="1202" y="634">Delta Transform</text>
<path d="M1176 653l4 4-4 4" fill="none" stroke="#ccc" stroke-width="1.100"/><text x="1188" y="661">Relations</text><use href="#grip" transform="translate(1341,655)"/>
<path d="M1176 680l4 4-4 4" fill="none" stroke="#ccc" stroke-width="1.100"/><text x="1188" y="688">Collections</text><use href="#grip" transform="translate(1341,682)"/>
<rect x="1361" y="287" width="3" height="280" rx="1" fill="#3c3c3c"/>

<!-- timeline -->
<rect x="0" y="659" width="1126" height="49" fill="#1f1f1f"/>
<path d="M0 659H1122a4 4 0 0 1 4 4V683H0z" fill="#303030"/>
<rect x="9" y="662" width="31" height="19" rx="4" fill="#282828"/>
<circle cx="20" cy="671.500" r="6.500" fill="#e0e0e0"/><path d="M20 665v6.500l5 3a6.500 6.500 0 0 0-5-9.500z" fill="#333"/><use href="#cd" transform="translate(31,670)"/>
<rect x="46" y="662" width="127" height="19" rx="4" fill="#282828" stroke="#3b3b3b"/><path d="M115 662v19" stroke="#3b3b3b"/>
<text x="53" y="676">Playback</text><use href="#cd" transform="translate(105,670)"/><text x="122" y="676">Keying</text><use href="#cd" transform="translate(164,670)"/>
<text x="183" y="676">View</text><text x="223" y="676">Marker</text>
<rect x="472" y="662" width="38" height="19" rx="4" fill="#2d2d2d"/><path d="M472 666a4 4 0 0 1 4-4h15v19h-15a4 4 0 0 1-4-4z" fill="#545454"/>
<circle cx="481" cy="671.500" r="3.800" fill="#e8e8e8"/><use href="#cd" transform="translate(497,670)" opacity=".4"/>
<rect x="517" y="662" width="118" height="19" rx="4" fill="#545454"/>
<path d="M536.500 662v19M556 662v19M576 662v19M596 662v19M615.500 662v19" stroke="#3c3c3c"/>
<path d="M523 666h2v11h-2zM532 666v11l-6-5.500z" fill="#e4e4e4"/>
<path d="M538 671.500l4-4 4 4-4 4zM548 671.500l4-5v10z" fill="#e4e4e4"/>
<path d="M572 666v11l-8-5.500z" fill="#e4e4e4"/><path d="M582 666v11l8-5.500z" fill="#e4e4e4"/>
<path d="M600 666v10l4-5zM605 671.500l4-4 4 4-4 4z" fill="#e4e4e4"/>
<path d="M621 666v11l6-5.500zM628 666h2v11h-2z" fill="#e4e4e4"/>
<rect x="849" y="662" width="73" height="19" rx="4" fill="#545454"/><text class="m" x="885" y="676">65</text>
<rect x="929" y="662" width="190" height="19" rx="4" fill="#545454"/>
<path d="M947 662v19M1035 662v19" stroke="#3c3c3c"/>
<circle cx="938" cy="672.500" r="5.800" fill="none" stroke="#ddd"/><path d="M936 664h4M938 665v2M938 672.500v-4" stroke="#ddd"/>
<text x="963" y="676">Start</text><text class="e" x="1023" y="676">1</text><text x="1051" y="676">End</text><text class="e" x="1106" y="676">250</text>
<g clip-path="url(#ct)"><text class="m" x="37" y="699">0</text><text class="m" x="121" y="699">20</text><text class="m" x="205" y="699">40</text><text class="m" x="289" y="699">60</text><text class="m" x="373" y="699">80</text><text class="m" x="456" y="699">100</text><text class="m" x="540" y="699">120</text><text class="m" x="624" y="699">140</text><text class="m" x="708" y="699">160</text><text class="m" x="792" y="699">180</text><text class="m" x="875" y="699">200</text><text class="m" x="959" y="699">220</text><text class="m" x="1043" y="699">240</text></g>
<path d="M299 691a4 4 0 0 1 4-4h15a4 4 0 0 1 4 4v7h-23z" fill="#4772b3"/><text class="m b" x="310.500" y="698">65</text>
<rect x="9" y="697" width="1109" height="7" rx="3.500" fill="#5c5c5c"/>
<circle cx="13" cy="700.500" r="3" fill="#3a3a3a" stroke="#777"/><circle cx="1114" cy="700.500" r="3" fill="#3a3a3a" stroke="#777"/>
<rect x="309.500" y="704" width="1" height="4" fill="#4772b3"/>

<!-- status bar -->
<rect y="708" width="1366" height="20" fill="#1d1d1d"/>
<g fill="none" stroke="#9a9a9a"><rect x="12.500" y="711.500" width="9" height="14" rx="4"/><rect x="223.500" y="711.500" width="9" height="14" rx="4"/><rect x="435.500" y="711.500" width="9" height="14" rx="4"/></g>
<rect x="13" y="712" width="4" height="6" fill="#9a9a9a"/><rect x="227" y="712" width="2" height="6" fill="#9a9a9a"/><rect x="440" y="712" width="4" height="6" fill="#9a9a9a"/>
<text x="34" y="722" class="d">Select</text><text x="245" y="722" class="d">Rotate View</text><text x="456" y="722" class="d">Object Context Menu</text>
<rect x="652.500" y="709.500" width="133" height="17" rx="3" fill="#1f1f1f" stroke="#3a3a3a"/><rect x="653" y="710" width="21" height="16" rx="3" fill="#1e3a6e"/>
<rect x="658" y="711" width="11" height="12" rx="2" fill="#fff"/><rect x="662.500" y="713" width="2" height="2" fill="#1e3a6e"/><rect x="662.500" y="716" width="2" height="5" fill="#1e3a6e"/><path d="M660 723v3l3-3z" fill="#fff"/>
<text x="681" y="722">Saved "gol.blend"</text>
<text class="e d" x="1354" y="722">3.6.12</text>

<!-- taskbar -->
<rect y="728" width="1366" height="40" fill="url(#tb)"/>
<path d="M16 741l7-1v7.500h-7zM24 739.800l8-1.300v9h-8zM16 748.500h7v7.500l-7-1zM24 748.500h8v9l-8-1.300z" fill="#fff"/>
<rect x="48.500" y="728.500" width="287" height="39" fill="#363b3e" stroke="#5e6265"/>
<circle cx="70" cy="745" r="5.500" fill="none" stroke="#e8e8e8" stroke-width="1.200"/><path d="M66 749.500l-5.500 6" stroke="#e8e8e8" stroke-width="1.200"/>
<text x="88" y="754" class="w" style="font-size:14.500px;fill:#e6eef2">Pesquisar</text>
<g clip-path="url(#cb)">
<ellipse cx="296" cy="772" rx="39" ry="15" fill="#6cae2a"/>
<path d="M262 768l18-10h34l16 10z" fill="#d8413f"/>
<g fill="#f5f0f0"><rect x="276" y="758" width="6" height="4"/><rect x="288" y="758" width="6" height="4"/><rect x="300" y="758" width="6" height="4"/><rect x="312" y="758" width="6" height="4"/><rect x="270" y="764" width="7" height="4"/><rect x="283" y="764" width="7" height="4"/><rect x="296" y="764" width="7" height="4"/><rect x="309" y="764" width="7" height="4"/><rect x="320" y="764" width="7" height="4"/></g>
<path d="M273 749h48l-3 13h-42z" fill="#d9a53a"/><path d="M276 753h42M277 756h40M278 759h38M285 749v13M296 749v13M307 749v13" stroke="#b07c20"/>
<rect x="271" y="743" width="52" height="6" rx="1" fill="#eeeae0"/>
<circle cx="278" cy="740" r="3" fill="#a8c43a"/><circle cx="283" cy="741" r="3" fill="#8fb028"/><circle cx="274" cy="741" r="2.500" fill="#bcd24c"/><circle cx="281" cy="737" r="2.500" fill="#9dbb30"/>
<path d="M289 743l3-6 5-1 4 3 1 4z" fill="#d62a36"/><path d="M292 736l3-3 3 3" stroke="#3f8c2a" stroke-width="1.500" fill="none"/>
<path d="M303 743l4-11 3-1 2 12z" fill="#9dcc4a"/><path d="M309 743l3-12c4 3 6 8 7 12z" fill="#e24a52"/>
</g>
<path d="M353 740.500h13M355.500 744.500h9v7h-9zM353 755.500h13M367.500 741v2M367.500 746v9" fill="none" stroke="#e8e8e8" stroke-width="1"/>
<circle cx="411" cy="748" r="12" fill="#1683d8"/><path d="M401 744c2-8 15-9 20-2 2 3 2 7 0 9h-8c3-3 0-8-4-7-5 0-6 6-4 10-3-2-5-6-4-10z" fill="#36d27f"/><path d="M402 749c1 7 8 11 14 9 3-1 5-3 6-5-4 3-11 3-13-1" fill="#0e5fa8"/>
<path d="M449 741h9l2 2h11v15h-22z" fill="#f2c33c"/><path d="M449 746h22v12h-22z" fill="#f9d96a"/><rect x="456" y="750" width="8" height="6" fill="#2f86d6"/>
<path d="M497 746l12-8 12 8v13h-24z" fill="#1b8ad8"/><path d="M497 746l12 9 12-9v13h-24z" fill="#45b6f2"/><path d="M497 746l12-8 12 8-12 7z" fill="#0b67b2"/>
<circle cx="558" cy="748" r="12" fill="#e53b30"/><path d="M558 748L548 754a12 12 0 0 0 10 6l6-6z" fill="#34a853"/><path d="M558 736a12 12 0 0 1 11 16l-6-4z" fill="#e53b30"/><path d="M564 754l5-10h-11z" fill="#fbbc05"/><path d="M558 760a12 12 0 0 0 11-16h-9l4 8z" fill="#fbbc05"/><path d="M547 742a12 12 0 0 0 5 16l6-9z" fill="#34a853"/><circle cx="558" cy="748" r="5.500" fill="#4a90e8" stroke="#fff" stroke-width="1.500"/>
<rect x="583" y="728" width="48" height="40" fill="#4a5c68"/>
<use href="#blg" transform="translate(595,738)"/>
<g fill="#84c0e6"><rect x="440" y="765" width="40" height="3"/><rect x="538" y="765" width="32" height="3"/><rect x="571" y="765" width="7" height="3"/><rect x="583" y="765" width="48" height="3"/></g>
<ellipse cx="942" cy="748.500" rx="10" ry="10" fill="url(#sun)"/>
<text x="962" y="754" class="w" style="font-size:13.800px;fill:#f2f2f2">26°C</text><text x="1000" y="754" class="w" style="font-size:13.500px;fill:#f2f2f2">Ensolarado</text>
<path d="M1093 752l6-6 6 6" fill="none" stroke="#fff" stroke-width="1.200"/>
<rect x="1119" y="743" width="7" height="11" rx="1" fill="none" stroke="#fff"/><path d="M1118 741c1-2 8-2 9 0M1118 756c1 2 8 2 9 0" stroke="#fff" fill="none"/><path d="M1126 747l2-1v5l-2-1" stroke="#fff" fill="none"/>
<rect x="1144" y="745" width="13" height="8" fill="#fff"/><path d="M1140 746v3a3 3 0 0 0 4 1" stroke="#fff" fill="none"/><path d="M1140 743v3M1142 743v3" stroke="#fff"/>
<path d="M1167 757a12 12 0 0 1 12-13M1170 757a8 8 0 0 1 9-9M1173 757a4 4 0 0 1 6-4" fill="none" stroke="#fff" opacity=".85"/>
<path d="M1188 745h3l3-3v13l-3-3h-3z" fill="none" stroke="#fff"/><path d="M1197 745a6 6 0 0 1 0 8M1199 743a9 9 0 0 1 0 12" fill="none" stroke="#fff"/>
<text class="m w" x="1225" y="745" style="font-size:12px;fill:#f2f2f2">POR</text><text class="m w" x="1225" y="762" style="font-size:12px;fill:#f2f2f2">PTB2</text>
<text class="m w" x="1278" y="743" style="font-size:11.800px;fill:#f2f2f2">15:24</text><text class="m w" x="1278" y="761" style="font-size:11.800px;fill:#f2f2f2">18/06/2024</text>
<path d="M1325 740h15v12h-8l-3 3v-3h-4z" fill="#fff"/><path d="M1328 743h9M1328 746h9M1328 749h7" stroke="#1b2a47"/>
<circle cx="1341" cy="756" r="8" fill="#4b5660" stroke="#8a9096"/><text class="m b" x="1341" y="760" style="font-size:10px">1</text>
</svg>
</body></html>
